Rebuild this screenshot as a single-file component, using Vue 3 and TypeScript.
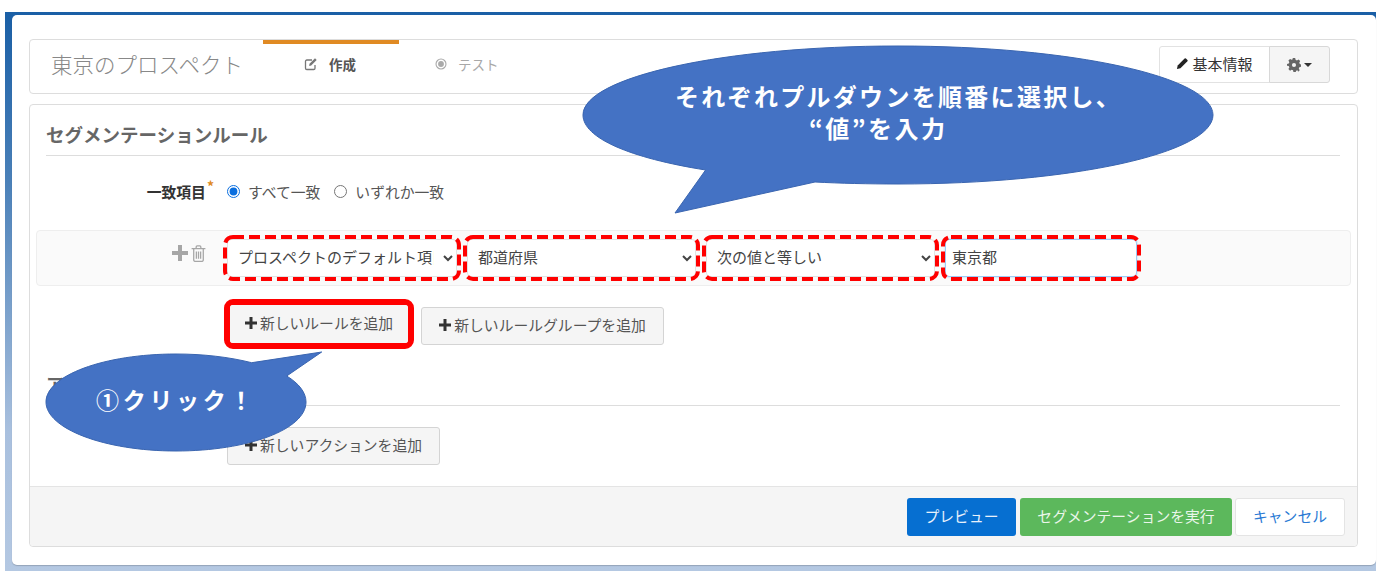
<script setup lang="ts">
const fields: { id: string; options: string[] }[] = [
  { id: 'a', options: ['プロスペクトのデフォルト項目'] },
  { id: 'b', options: ['都道府県'] },
  { id: 'c', options: ['次の値と等しい'] },
]
</script>

<template>
  <div class="shot">
    <div class="card">
      <header class="head">
        <h1 class="title">東京のプロスペクト</h1>
        <nav class="tabs">
          <span class="tab active">
            <svg viewBox="0 0 14 14" width="14" height="14"><path d="M11 8v3.2a1.3 1.3 0 0 1-1.3 1.3H2.8a1.3 1.3 0 0 1-1.3-1.3V4.300a1.300 1.300 0 0 1 1.300-1.300H8" fill="none" stroke="#777" stroke-width="1.300"/><path d="M5.500 6.800 11 1.300l1.700 1.700L7.200 8.500 5.200 9z" fill="#777"/></svg>
            作成
          </span>
          <span class="tab idle">
            <svg viewBox="0 0 14 14" width="12" height="12"><circle cx="7" cy="7" r="5.800" fill="none" stroke="#aaa" stroke-width="1.300"/><circle cx="7" cy="7" r="3.400" fill="#aaa"/></svg>
            テスト
          </span>
        </nav>
        <div class="tools">
          <button class="tool info">
            <svg viewBox="0 0 14 14" width="13" height="13"><path d="M1 13l.8-3.800L9.300 1.700a1 1 0 0 1 1.400 0l1.600 1.600a1 1 0 0 1 0 1.400L4.800 12.200z" fill="#222"/></svg>
            基本情報
          </button>
          <button class="tool gear">
            <svg viewBox="0 0 24 24" width="14" height="14"><path fill="#666" fill-rule="evenodd" d="M10 0h4l.7 3.200 2.300 1 2.800-1.800 2.800 2.800L21 8l1 2.300 2 .7v4l-2.800.7-1 2.300 1.600 2.800-2.800 2.800L18 20.800l-2.300 1-.7 2.200h-4l-.7-2.800-2.300-1L5.200 21.800l-2.800-2.800L4 16.200l-1-2.300L0 13.200v-3l3-.7 1-2.300L2.400 4.400l2.800-2.800L8 3.200l1.300-.6zM12 8.500a3.500 3.500 0 1 0 0 7 3.500 3.500 0 0 0 0-7z"/></svg>
            <i class="caret"></i>
          </button>
        </div>
      </header>

      <section class="panel">
        <div class="body">
          <h2 class="sec-title">セグメンテーションルール</h2>
          <div class="match">
            <span class="match-label">一致項目<sup class="star">*</sup></span>
            <label class="radio"><input type="radio" name="m" checked />すべて一致</label>
            <label class="radio"><input type="radio" name="m" />いずれか一致</label>
          </div>
          <div class="rule">
            <div class="rule-icons">
              <svg viewBox="0 0 16 16" width="16" height="16"><path fill="#a6a6a6" d="M6 0h4v6h6v4h-6v6H6v-6H0V6h6z"/></svg>
              <svg viewBox="0 0 14 16" width="15" height="17"><path fill="none" stroke="#a6a6a6" stroke-width="1.200" d="M.5 3.500h13M2.500 3.500V14a1.500 1.500 0 0 0 1.500 1.500h6a1.500 1.500 0 0 0 1.500-1.500V3.500M4.800 3.500V1.800a1 1 0 0 1 1-1h2.400a1 1 0 0 1 1 1v1.700M5 6v7M7 6v7M9 6v7"/></svg>
            </div>
            <div v-for="f in fields" :key="f.id" class="dash">
              <select class="ctl">
                <option v-for="o in f.options" :key="o">{{ o }}</option>
              </select>
              <svg class="dash-line"><rect /></svg>
            </div>
            <div class="dash dash-input">
              <input class="ctl field" value="東京都" />
              <svg class="dash-line"><rect /></svg>
            </div>
          </div>
          <div class="add-row">
            <div class="red-frame">
              <button class="btn">
                <svg viewBox="0 0 16 16" width="12" height="12"><path fill="#333" d="M6 0h4v6h6v4h-6v6H6v-6H0V6h6z"/></svg>
                新しいルールを追加
              </button>
            </div>
            <button class="btn group">
              <svg viewBox="0 0 16 16" width="12" height="12"><path fill="#333" d="M6 0h4v6h6v4h-6v6H6v-6H0V6h6z"/></svg>
              新しいルールグループを追加
            </button>
          </div>
          <h2 class="sec-title second">アクション</h2>
          <div class="action-row">
            <button class="btn">
              <svg viewBox="0 0 16 16" width="12" height="12"><path fill="#333" d="M6 0h4v6h6v4h-6v6H6v-6H0V6h6z"/></svg>
              新しいアクションを追加
            </button>
          </div>
        </div>
        <footer class="foot">
          <button class="fbtn preview">プレビュー</button>
          <button class="fbtn run">セグメンテーションを実行</button>
          <button class="fbtn cancel">キャンセル</button>
        </footer>
      </section>
    </div>

    <svg class="callouts" width="1384" height="578" viewBox="0 0 1384 578">
      <path d="M705.600 170C630 158 583 138 583 115c0-38 141-69 315-69s315 31 315 69-141 69-315 69c-30 0-58-.700-83-2L675 213z" fill="#4472c4" stroke="#3a65b0" stroke-width="1"/>
      <text class="bubble-text big" x="675" y="106" letter-spacing="2.300">それぞれプルダウンを順番に選択し、</text>
      <text class="bubble-text big" x="809" y="138" letter-spacing="2.500">“値”を入力</text>
      <path d="M251.700 362.700C229 357 203 354 176 354c-72 0-130 21.500-130 48s58 49 130 49 130-21.500 130-49c0-9.500-7-18.500-19.300-26L321.700 352z" fill="#4472c4" stroke="#3a65b0" stroke-width="1"/>
      <text class="bubble-text" x="96" y="409" letter-spacing="3.700">①クリック！</text>
    </svg>
  </div>
</template>

<style>
html, body { margin: 0; background: #fff; overflow: hidden; }
</style>

<style scoped>
.shot {
  position: relative;
  box-sizing: border-box;
  width: 1371px;
  height: 559px;
  margin: 12px 0 0 5px;
  padding: 3px 0 0 7px;
  background: linear-gradient(180deg, #1a5fa6 0%, #4a80b8 30%, #a9c0de 75%, #b4c8e2 100%);
  font-family: "Noto Sans CJK JP", "Noto Sans", sans-serif;
  color: #333;
  font-size: 14.800px;
}
.card {
  box-sizing: border-box;
  width: 1364px;
  height: 550px;
  padding: 24px 0 0 17px;
  background: #fff;
  border-radius: 5px;
  box-shadow: 0 1px 1px rgba(0, 0, 0, .18);
}
.head {
  box-sizing: border-box;
  display: flex;
  align-items: center;
  width: 1329px;
  height: 55px;
  border: 1px solid #ddd;
  border-radius: 4px;
  background: #fff;
}
.title {
  flex: none;
  width: 212px;
  margin: 0 0 0 21px;
  padding-bottom: 5px;
  font-size: 21.500px;
  line-height: 30px;
  font-weight: 300;
  color: #888;
  white-space: nowrap;
}
.tabs { display: flex; flex: none; height: 100%; }
.tab {
  display: flex;
  align-items: center;
  box-sizing: border-box;
  width: 136px;
  font-size: 13.500px;
}
.tab.active {
  gap: 11px;
  padding: 0 0 9px 41px;
  border-top: 4px solid #e08a23;
  color: #555;
  font-weight: 700;
}
.tab.idle { gap: 11px; padding: 0 0 6px 36px; color: #a8a8a8; }
.tools { display: flex; flex: none; align-self: flex-start; margin: 6px 27px 0 auto; }
.tool {
  display: flex;
  align-items: center;
  justify-content: center;
  box-sizing: border-box;
  height: 37px;
  padding: 0 0 2px;
  font: inherit;
  font-size: 15px;
  color: #333;
  border: 1px solid #e2e2e2;
  cursor: pointer;
}
.info { width: 111px; gap: 3px; background: #fff; border-radius: 3px 0 0 3px; }
.gear { width: 61px; gap: 3px; margin-left: -1px; padding: 0; background: #f5f5f5; border-color: #d8d8d8; border-radius: 0 3px 3px 0; }
.caret { width: 0; height: 0; border: 4px solid transparent; border-top-color: #333; border-bottom: 0; }
.panel {
  box-sizing: border-box;
  width: 1329px;
  height: 443px;
  margin-top: 10px;
  display: flex;
  flex-direction: column;
  border: 1px solid #ddd;
  border-radius: 4px;
}
.body { flex: 1; padding: 0 17px 0 16px; }
.sec-title {
  box-sizing: border-box;
  height: 51px;
  margin: 0;
  padding-top: 15px;
  font-size: 18.500px;
  line-height: 28px;
  font-weight: 700;
  color: #666;
  border-bottom: 1px solid #ddd;
}
.sec-title.second { height: 57px; padding-top: 21px; }
.match {
  display: flex;
  align-items: center;
  height: 20px;
  margin-top: 25px;
}
.match-label {
  box-sizing: border-box;
  width: 172px;
  padding-right: 4px;
  text-align: right;
  font-weight: 700;
  white-space: nowrap;
  color: #333;
}
.star { color: #e08a23; font-size: 14px; line-height: 0; margin-left: 1px; }
.radio {
  display: flex;
  align-items: center;
  margin-left: 9px;
  color: #555;
  gap: 5px;
}
.radio input { width: 13px; height: 13px; margin: 0 3px 0 0; accent-color: #0a6ede; }
.radio + .radio { margin-left: 14px; }
.rule {
  box-sizing: border-box;
  display: flex;
  align-items: center;
  gap: 4px;
  width: 1315px;
  height: 56px;
  margin: 29px 0 0 -10px;
  padding-left: 135px;
  background: #fafafa;
  border: 1px solid #eee;
  border-radius: 4px;
}
.rule-icons {
  flex: none;
  display: flex;
  align-items: center;
  gap: 3px;
  width: 48px;
  margin-bottom: 10px;
}
.dash {
  position: relative;
  flex: none;
  box-sizing: border-box;
  width: 235px;
  height: 44px;
  padding: 3px;
}
.dash:nth-child(2) { width: 236px; }
.dash-input { width: 198px; }
.dash-line { position: absolute; inset: 0; width: 100%; height: 100%; overflow: visible; pointer-events: none; }
.dash-line rect {
  x: 1px;
  y: 1px;
  width: calc(100% - 2px);
  height: calc(100% - 2px);
  rx: 8px;
  fill: none;
  stroke: #f00;
  stroke-width: 4px;
  stroke-dasharray: 11 5;
}
.ctl {
  box-sizing: border-box;
  display: block;
  width: 100%;
  height: 38px;
  padding: 0 6px 3px;
  font: inherit;
  font-size: 15px;
  color: #444;
  background: #fff;
  border: 1px solid #e2e2e2;
  border-radius: 4px;
  outline: none;
}
.field {
  border-color: #9ecbf5;
  box-shadow: 0 0 2px rgba(102, 175, 233, .6);
}
.add-row {
  display: flex;
  align-items: flex-start;
  gap: 7px;
  margin: 13px 0 0 178px;
}
.red-frame {
  box-sizing: border-box;
  width: 190px;
  height: 50px;
  border: 6px solid #f00;
  border-radius: 9px;
  background: #f5f5f5;
}
.btn {
  display: flex;
  align-items: center;
  justify-content: center;
  gap: 3px;
  box-sizing: border-box;
  height: 38px;
  padding: 0 17px 3px;
  font: inherit;
  font-size: 14.800px;
  color: #555;
  background: #f5f5f5;
  border: 1px solid #d4d4d4;
  border-radius: 3px;
  cursor: pointer;
  white-space: nowrap;
}
.red-frame .btn { width: 100%; border: 0; padding: 0 0 3px; }
.btn.group { width: 243px; margin-top: 8px; padding-left: 0; padding-right: 0; }
.action-row { margin: 21px 0 0 181px; }
.action-row .btn { width: 213px; padding-left: 0; padding-right: 0; }
.foot {
  display: flex;
  align-items: center;
  justify-content: flex-end;
  gap: 4px;
  box-sizing: border-box;
  height: 60px;
  padding-right: 12px;
  background: #f5f5f5;
  border-top: 1px solid #e4e4e4;
  border-radius: 0 0 4px 4px;
}
.fbtn {
  box-sizing: border-box;
  height: 38px;
  padding: 0 0 3px;
  font: inherit;
  font-size: 14.800px;
  border: 1px solid transparent;
  border-radius: 3px;
  cursor: pointer;
}
.preview { width: 109px; background: #066fd1; color: #e8f1fb; }
.run { width: 212px; background: #5cb85c; color: #eaf6ea; }
.cancel { width: 110px; margin-left: -1px; background: #fff; border-color: #e4e4e4; color: #2a7ad4; }
.callouts { position: absolute; left: -5px; top: -12px; pointer-events: none; }
.bubble-text {
  fill: #fff;
  font-family: "Noto Sans CJK JP", sans-serif;
  font-size: 23px;
  font-weight: 700;
}
.bubble-text.big { font-size: 24px; }
</style>
